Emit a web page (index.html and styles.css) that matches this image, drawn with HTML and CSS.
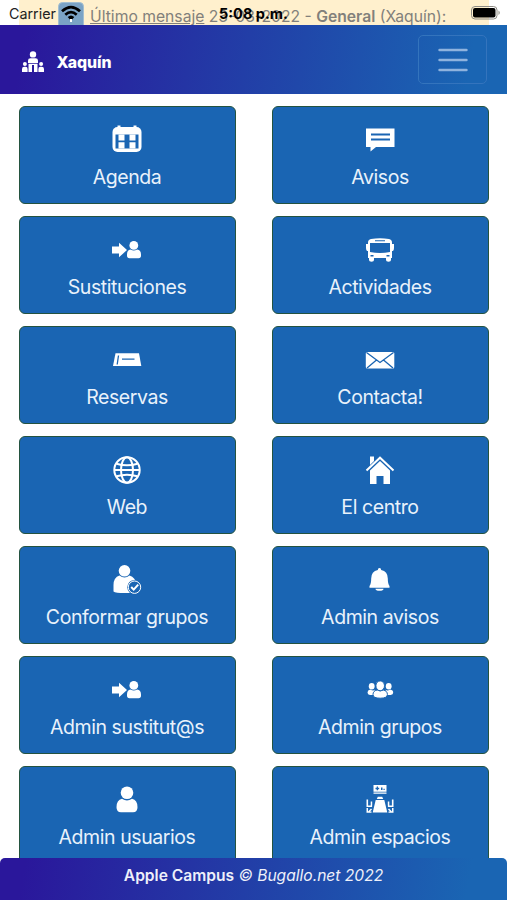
FILE: index.html
```
<!DOCTYPE html>
<html lang="es">
<head>
	<meta charset="UTF-8">
	<meta name="viewport" content="width=device-width, initial-scale=1">
	<title>Bugallo.net</title>
	<link rel="stylesheet" href="styles.css">
</head>
<body>

<div class="mensaje">
	<p><u>Último mensaje</u> 23-03-2022 - <b>General</b> (Xaquín):</p>
</div>

<!-- barra de estado -->
<div class="estado">
	<span class="carrier">Carrier</span>
	<svg class="wifi" viewBox="0 0 26 26">
		<rect x=".5" y=".5" width="25" height="28" rx="4" fill="#7ba3c5" stroke="#a3bed0"/>
		<g fill="none" stroke="#000" stroke-width="2.7">
			<path d="M4 9.2Q13 1 22 9.2"/>
			<path d="M7.3 12.7Q13 7.6 18.7 12.7"/>
		</g>
		<path d="M9.7 15Q13 12 16.3 15L13 18.7z"/>
		<path d="M12 17h2v3h-2z" fill="#fff"/>
	</svg>
	<span class="hora">5:08 p.m.</span>
	<svg class="bateria" viewBox="0 0 30 14">
		<rect x=".5" y=".5" width="25.5" height="12.5" rx="3.5" fill="none" stroke="#8d8b84"/>
		<rect x="2" y="2" width="22.5" height="9.5" rx="2"/>
		<path d="M27.5 4.5q2.5 2.2 0 4.6z" fill="#8d8b84"/>
	</svg>
</div>

<nav class="navbar">
	<div class="marca">
		<svg viewBox="0 0 22 22" fill="#fff">
			<circle cx="11" cy="3.4" r="3.2"/>
			<path d="M6 12V9.500Q6 7.200 8.500 7.200h5Q16 7.200 16 9.500V12z"/>
			<path d="M6.500 12.700h9V21H12v-7h-2v7H6.500z"/>
			<circle cx="2.900" cy="13" r="2"/>
			<circle cx="19.100" cy="13" r="2"/>
			<path d="M0 21v-3q0-2.300 2.300-2.300h1.300q2 0 2 2.300v3zM16.400 21v-3q0-2.300 2-2.300h1.300q2.300 0 2.300 2.300v3z"/>
		</svg>
		<span>Xaquín</span>
	</div>
	<button class="toggler" type="button" aria-label="Menú">
		<svg viewBox="0 0 30 30" stroke="#8fb3de" stroke-width="2.400" stroke-linecap="round">
			<path d="M1.500 5h27M1.500 15h27M1.500 25h27"/>
		</svg>
	</button>
</nav>

<main class="menu">
	<a class="boton">
		<svg viewBox="0 0 30 30">
			<rect x=".5" y="2" width="29" height="25" rx="5"/>
			<path d="M5.500.500h3v4h-3zM21.500.500h3v4h-3z"/>
			<path class="hueco" d="M3.500 9.500h23v14h-23z"/>
			<path d="M6.500 9.500h6v6h-6zM17.500 9.500h6v6h-6zM6.500 17.300h6v6.200h-6zM17.500 17.300h6v6.200h-6z"/>
		</svg>
		<span>Agenda</span>
	</a>
	<a class="boton">
		<svg viewBox="0 0 30 30">
			<path d="M1 3.500h28.500V22H11l-5.500 4.500V22H1z"/>
			<path class="linea" d="M6 9.500h19M6 14.500h19"/>
		</svg>
		<span>Avisos</span>
	</a>
	<a class="boton">
		<svg viewBox="0 0 30 30">
			<path d="M0 11.500h7V7.700l8 7.300-8 7.300v-3.800H0z"/>
			<circle cx="21.800" cy="10.400" r="4.400"/>
			<path d="M18.500 14.500q3.300 2 6.600 0 3.900.5 3.900 5v1q0 2.700-2.500 2.700h-9q-2.500 0-2.500-2.700v-1q0-4.500 3.500-5z"/>
		</svg>
		<span>Sustituciones</span>
	</a>
	<a class="boton">
		<svg viewBox="0 0 30 30">
			<path d="M3 7.500q0-3 3-3.500 9-1.500 18 0 3 .5 3 3.500V23H3z"/>
			<path d="M4 22h5v3q0 1.700-2.500 1.700T4 25zM21 22h5v3q0 1.700-2.500 1.700T21 25zM1 9h2.500v7H2q-1-1-1-3zM26.500 9H29v4q0 2-1 3h-1.500z"/>
			<path class="hueco" d="M5 8h20v9q-10 2-20 0z"/>
			<path class="hueco" d="M10 5.300h10v1H10zM5.500 20h3v1.500h-3zM21.500 20h3v1.500h-3z"/>
		</svg>
		<span>Actividades</span>
	</a>
	<a class="boton">
		<svg viewBox="0 0 30 30">
			<path d="M3.500 8.300h23.500L29.300 21H1z"/>
			<path class="linea fina" d="M10 14.200h12.500M6.500 10.500 5.200 19.500"/>
		</svg>
		<span>Reservas</span>
	</a>
	<a class="boton">
		<svg viewBox="0 0 30 30">
			<rect x=".8" y="7" width="28.500" height="16.500" rx="1.500"/>
			<path class="linea fina" d="m1.500 7.500 13.500 10 13.500-10M2 23l9.500-8M28 23l-9.500-8"/>
		</svg>
		<span>Contacta!</span>
	</a>
	<a class="boton">
		<svg viewBox="0 0 30 30">
			<g class="trazo">
				<circle cx="15" cy="15" r="12.700"/>
				<ellipse cx="15" cy="15" rx="6" ry="12.700"/>
				<path d="M2.300 15h25.400M4.500 8.700q10.500 3.300 21 0M4.500 21.300q10.500-3.300 21 0"/>
			</g>
		</svg>
		<span>Web</span>
	</a>
	<a class="boton">
		<svg viewBox="0 0 30 30">
			<path d="M5 1.500h4V6L5 10z"/>
			<path d="M5 15.500 15 6l10 9.500V29h-6.500v-8h-7v8H5z"/>
			<path class="trazo" d="M1.500 15.500 15 2.700l13.500 12.800"/>
		</svg>
		<span>El centro</span>
	</a>
	<a class="boton">
		<svg viewBox="0 0 30 30">
			<circle cx="12.500" cy="5.800" r="5.800"/>
			<path d="M7.500 10.500q5 4 10 0 6 2 7 9V26q-3 2-12 2T1.500 26.500V20q0-7.500 6-9.500z"/>
			<circle class="hueco" cx="22.500" cy="22.200" r="7.200"/>
			<circle class="aro" cx="22.500" cy="22.200" r="6.200"/>
			<path class="trazo" d="m19.200 22 2.500 2.600 4.500-5"/>
		</svg>
		<span>Conformar grupos</span>
	</a>
	<a class="boton">
		<svg viewBox="0 0 30 30">
			<path d="M12.800 5q0-2 1.700-2t1.700 2q6.500 1.200 6.600 8.500 0 5.500 1.700 7.500v1.700h-20V21q1.700-2 1.700-7.500Q6.300 6.200 12.800 5zM10.500 23.800h8q0 2-4 2t-4-2z"/>
		</svg>
		<span>Admin avisos</span>
	</a>
	<a class="boton">
		<svg viewBox="0 0 30 30">
			<path d="M0 11.500h7V7.700l8 7.300-8 7.300v-3.800H0z"/>
			<circle cx="21.800" cy="10.400" r="4.400"/>
			<path d="M18.500 14.500q3.300 2 6.600 0 3.900.5 3.900 5v1q0 2.700-2.500 2.700h-9q-2.500 0-2.500-2.700v-1q0-4.500 3.500-5z"/>
		</svg>
		<span>Admin sustitut@s</span>
	</a>
	<a class="boton">
		<svg viewBox="0 0 30 30">
			<ellipse cx="6.700" cy="11.300" rx="2.900" ry="3.200"/>
			<ellipse cx="23.700" cy="11.300" rx="2.900" ry="3.200"/>
			<path d="M5.200 14.500q3.500 2 4.500 0V20H5q-2.500-.5-2.500-2.500 0-2.500 2.700-3zM25.200 14.500q-3.500 2-4.500 0V20h5q2.500-.5 2.500-2.500 0-2.500-3-3z"/>
			<path class="borde" d="M12.200 15q3 2 6 0 4.200.8 4.200 4.500 0 3.700-7.200 3.700T8 19.500q0-3.700 4.200-4.500z"/>
			<ellipse class="borde" cx="15.200" cy="10.800" rx="4.300" ry="4.900"/>
		</svg>
		<span>Admin grupos</span>
	</a>
	<a class="boton">
		<svg viewBox="0 0 30 30">
			<circle cx="15" cy="7.700" r="6.300"/>
			<path d="M10 13.700q5 3.500 10 0 5.500 1 5.500 8.500 0 5-4.500 5H9q-4.500 0-4.500-5 0-7.500 5.500-8.500z"/>
		</svg>
		<span>Admin usuarios</span>
	</a>
	<a class="boton">
		<svg viewBox="0 0 30 30">
			<path d="M8.500 0h13v6.700h-13zM8.500 7.500h13v1.200h-13z"/>
			<path class="hueco" d="M10.500 2.700h3.700v1.500h-3.700zM11.700 1.500h1.300v3.800h-1.300zM16 2.500h1.500V5H16zM18.500 3.700h1.200V5h-1.200z"/>
			<path d="M12.800 11.700h4.400l1 2.200h-6.400zM10.700 15h8.600l3 12.500H7.700z"/>
			<path d="M1.500 14.500h1.600v6h4V22H1.500zM28.500 14.500h-1.600v6h-4V22h5.600zM5.700 16.500h1.500v4H5.700zM22.800 16.500h1.500v4h-1.500z"/>
			<path d="M1.500 23H3v3.500l3-3 1 1-2 2h1.500v1.300h-5zM28.500 23H27v3.500l-3-3-1 1 2 2h-1.500v1.300h5z"/>
		</svg>
		<span>Admin espacios</span>
	</a>
</main>

<footer class="pie">
	<b>Apple Campus</b> <i>© Bugallo.net 2022</i>
</footer>

</body>
</html>
```
FILE: styles.css
```
* {
	box-sizing: border-box;
}
html, body {
	height: 100%;
}
body {
	margin: 0;
	overflow: hidden;
	background-color: #fff;
	font-family: Inter, "Liberation Sans", sans-serif;
}

.mensaje {
	height: 25px;
	margin: 0 18px 0 19px;
	background-color: #fff0cd;
	color: #82807b;
	font-size: 15.7px;
	line-height: 18px;
	overflow: hidden;
	white-space: nowrap;
}
.mensaje p {
	margin: 8px 0 0 71px;
}
.mensaje b {
	font-weight: 600;
}

/* la barra de estado va por encima del mensaje */
.estado {
	position: absolute;
	top: 0;
	left: 0;
	width: 100%;
	height: 25px;
	overflow: hidden;
}
.carrier, .hora, .wifi, .bateria {
	position: absolute;
}
.carrier {
	left: 9px;
	top: 5px;
	font-size: 14.3px;
	line-height: 18px;
	color: #222;
}
.wifi {
	left: 58px;
	top: 2px;
	width: 26px;
	height: 26px;
}
.hora {
	left: 219px;
	top: 5px;
	font-size: 14.5px;
	font-weight: 700;
	line-height: 18px;
	white-space: nowrap;
}
.bateria {
	left: 471px;
	top: 6px;
	width: 30px;
	height: 14px;
}

.navbar {
	display: flex;
	align-items: center;
	justify-content: space-between;
	height: 69px;
	padding: 0 20px 0 22px;
	background: linear-gradient(100deg, #2a179b 5%, #1a65b3 92%);
	position: relative;
}
.marca {
	display: flex;
	align-items: center;
	gap: 12.5px;
	padding-top: 5px;
	color: #fff;
	font-size: 15.8px;
	font-weight: 800;
}
.marca svg {
	width: 22px;
	height: 22px;
}
.toggler {
	display: flex;
	align-items: center;
	justify-content: center;
	width: 69px;
	height: 49px;
	padding: 0;
	background: none;
	border: 1px solid #3474bd;
	border-radius: 5px;
}
.toggler svg {
	width: 30px;
	height: 30px;
}

.menu {
	display: grid;
	grid-template-columns: 217px 217px;
	grid-auto-rows: 98px;
	gap: 12px 36px;
	padding: 12px 18px 0 19px;
}
.boton {
	display: flex;
	flex-direction: column;
	align-items: center;
	padding: 18px 1px 0 0;
	background-color: #1a65b3;
	border: 1px solid #24533f;
	border-radius: 6px;
	color: #e9f2fb;
	font-size: 19.5px;
	letter-spacing: -.42px;
	line-height: 24px;
	white-space: nowrap;
}
.boton svg {
	width: 30px;
	height: 30px;
	margin-bottom: 10px;
	fill: #fff;
}
.boton .hueco {
	fill: #1a65b3;
}
.boton .linea {
	fill: none;
	stroke: #1a65b3;
	stroke-width: 2;
}
.boton .fina {
	stroke-width: 1.3;
}
.boton .trazo {
	fill: none;
	stroke: #fff;
	stroke-width: 2;
}
.boton .aro {
	fill: none;
	stroke: #fff;
	stroke-width: 1;
}
.boton .borde {
	stroke: #1a65b3;
	stroke-width: 1;
}

.pie {
	position: fixed;
	left: 0;
	right: 0;
	bottom: 0;
	height: 42px;
	padding-top: 8px;
	background: linear-gradient(100deg, #2a179b 5%, #1a65b3 92%);
	border-radius: 5px 5px 0 0;
	color: #eef0fa;
	font-size: 15.6px;
	line-height: 20px;
	text-align: center;
}
.pie b {
	font-weight: 600;
}
```
